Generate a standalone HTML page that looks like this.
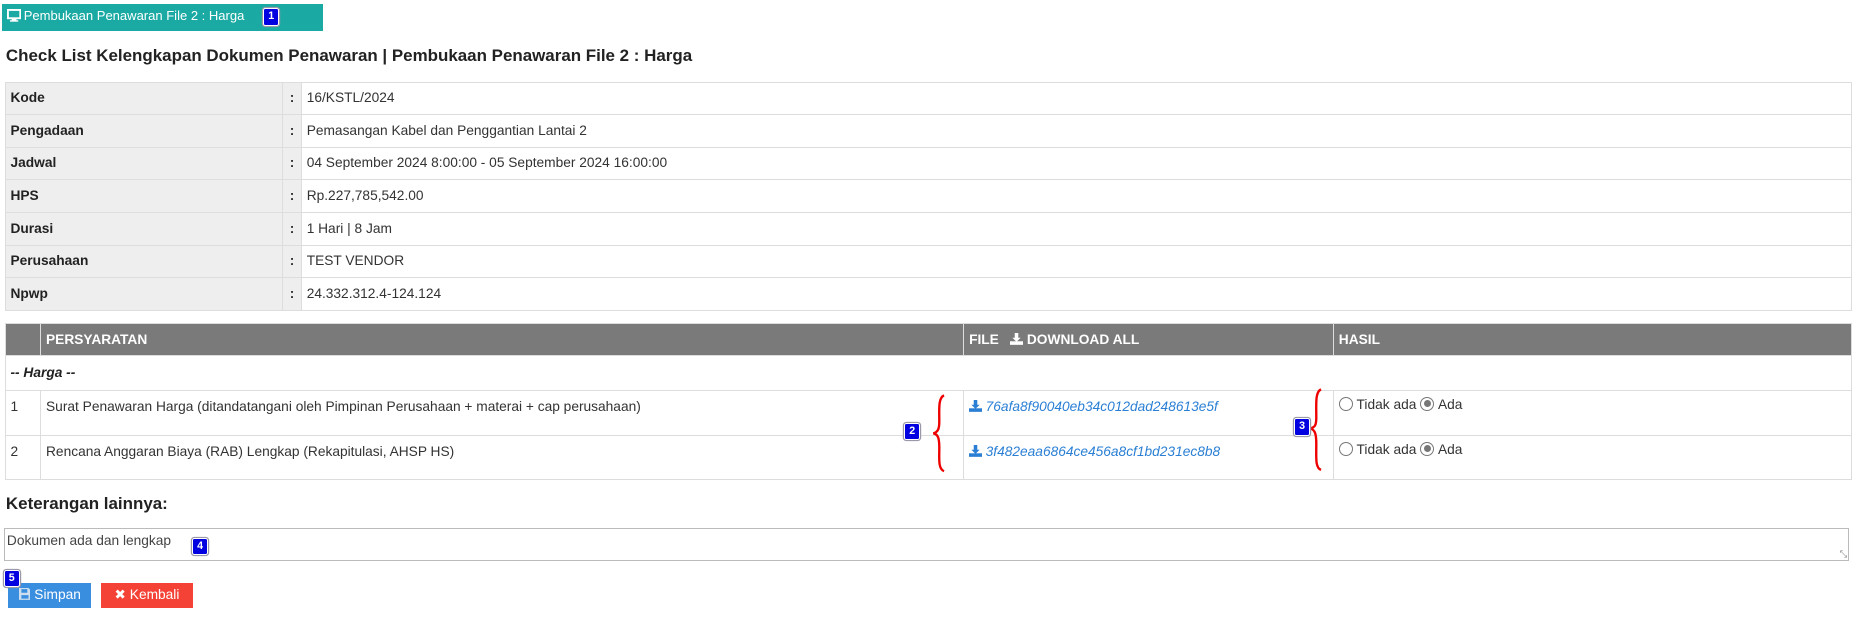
<!DOCTYPE html>
<html><head><meta charset="utf-8"><style>
html,body{margin:0;padding:0;background:#fff;width:1858px;height:630px;overflow:hidden}
#w{position:relative;width:1568px;height:532px;zoom:1.18495;font-family:"Liberation Sans",Arial,sans-serif;color:#333;font-size:11.6px}
.a{position:absolute}
.bar{left:2px;top:3px;width:271px;height:23px;background:#1aa9a3;color:#fff;font-size:11px;line-height:21px}
.bd{position:absolute;background:#0000e0;color:#fff;font-size:9px;font-weight:bold;width:12px;height:13px;line-height:13px;text-align:center;border:1px solid #fff;border-radius:2px;box-shadow:0 0 0 1px #99a}
h1{position:absolute;left:5px;top:39px;margin:0;font-size:14.3px;font-weight:bold;color:#222}
table{position:absolute;border-collapse:collapse;font-size:11.6px;line-height:14px}
td,th{border:1px solid #ddd;padding:0 4px;text-align:left;vertical-align:middle;box-sizing:border-box}
#t1{left:4px;top:69px;width:1559px}
#t1 td{height:27.5px}
#t1 td.l{background:#eee;font-weight:bold;width:234px;color:#222}
#t1 td.c{background:#eee;width:16px;font-weight:bold;text-align:center}
#t2{left:4px;top:273px;width:1559px}
#t2 th{background:#7a7a7a;color:#fff;font-weight:bold;height:27px;vertical-align:top;padding-top:6px;border-color:#ddd}
#t2 td{vertical-align:top;padding-top:7px}
a{color:#2a7fd4;font-style:italic;text-decoration:none}
.rd{display:inline-block;border:1px solid #777;border-radius:50%;vertical-align:-2px;margin-right:3px;position:relative;box-sizing:border-box;width:12px;height:12px}
.rd.on:after{content:"";position:absolute;left:2px;top:2px;width:6px;height:6px;border-radius:50%;background:#777}
.btn{position:absolute;color:#fff;font-size:11.6px;line-height:21px;text-align:center;height:21px}
.dl{display:inline-block;vertical-align:-1px;margin-right:3px}
</style></head><body><div id="w">
<div class="a bar"><svg width="12" height="11" viewBox="0 0 12 11" style="position:absolute;left:4px;top:5px"><rect x="0.8" y="0.8" width="10.4" height="7" fill="none" stroke="#fff" stroke-width="1.6"/><rect x="4" y="8" width="4" height="2" fill="#fff"/><rect x="2.5" y="9.5" width="7" height="1.2" fill="#fff"/></svg><span style="position:absolute;left:18px;top:0">Pembukaan Penawaran File 2 : Harga</span></div>
<div class="bd" style="left:222px;top:7px">1</div>
<h1>Check List Kelengkapan Dokumen Penawaran | Pembukaan Penawaran File 2 : Harga</h1>
<table id="t1">
<tr><td class="l">Kode</td><td class="c">:</td><td>16/KSTL/2024</td></tr>
<tr><td class="l">Pengadaan</td><td class="c">:</td><td>Pemasangan Kabel dan Penggantian Lantai 2</td></tr>
<tr><td class="l">Jadwal</td><td class="c">:</td><td>04 September 2024 8:00:00 - 05 September 2024 16:00:00</td></tr>
<tr><td class="l">HPS</td><td class="c">:</td><td>Rp.227,785,542.00</td></tr>
<tr><td class="l">Durasi</td><td class="c">:</td><td>1 Hari | 8 Jam</td></tr>
<tr><td class="l">Perusahaan</td><td class="c">:</td><td>TEST VENDOR</td></tr>
<tr><td class="l">Npwp</td><td class="c">:</td><td>24.332.312.4-124.124</td></tr>
</table>
<table id="t2">
<tr><th style="width:30px"></th><th style="width:779px">PERSYARATAN</th><th style="width:312px">FILE &nbsp; <svg class="dl" width="11" height="10" viewBox="0 0 11 10"><path d="M4 0h3v4h2l-3.5 3.5L2 4h2z" fill="#fff"/><rect x="0" y="7" width="11" height="3" fill="#fff"/></svg>DOWNLOAD ALL</th><th>HASIL</th></tr>
<tr><td colspan="4" style="height:29px;font-weight:bold;font-style:italic;color:#222">-- Harga --</td></tr>
<tr><td style="height:38px">1</td><td>Surat Penawaran Harga (ditandatangani oleh Pimpinan Perusahaan + materai + cap perusahaan)</td><td><a><svg class="dl" width="11" height="10" viewBox="0 0 11 10"><path d="M4 0h3v4h2l-3.5 3.5L2 4h2z" fill="#2a7fd4"/><rect x="0" y="7" width="11" height="3" fill="#2a7fd4"/></svg>76afa8f90040eb34c012dad248613e5f</a></td><td style="padding-top:5px"><span class="rd"></span>Tidak ada <span class="rd on"></span>Ada</td></tr>
<tr><td style="height:37px">2</td><td>Rencana Anggaran Biaya (RAB) Lengkap (Rekapitulasi, AHSP HS)</td><td><a><svg class="dl" width="11" height="10" viewBox="0 0 11 10"><path d="M4 0h3v4h2l-3.5 3.5L2 4h2z" fill="#2a7fd4"/><rect x="0" y="7" width="11" height="3" fill="#2a7fd4"/></svg>3f482eaa6864ce456a8cf1bd231ec8b8</a></td><td style="padding-top:5px"><span class="rd"></span>Tidak ada <span class="rd on"></span>Ada</td></tr>
</table>
<svg class="a" style="left:786px;top:332px" width="16" height="68"><path d="M11 2 C6 4 7 14 7 24 C7 30 6 33 2 34 C6 35 7 38 7 46 C7 56 6 64 11 66" fill="none" stroke="#e00" stroke-width="2"/></svg>
<svg class="a" style="left:1104px;top:327px" width="16" height="72"><path d="M11 2 C6 4 7 14 7 26 C7 32 6 34 2 35 C6 36 7 40 7 48 C7 60 6 68 11 70" fill="none" stroke="#e00" stroke-width="2"/></svg>
<div class="bd" style="left:763px;top:357px">2</div>
<div class="bd" style="left:1092px;top:353px">3</div>
<div class="a" style="left:5px;top:417px;font-size:14.3px;font-weight:bold;color:#222">Keterangan lainnya:</div>
<div class="a" style="left:3px;top:446px;width:1556px;height:26px;border:1px solid #bbb;font-size:11.6px;color:#444"><span style="position:absolute;left:2px;top:3px">Dokumen ada dan lengkap</span><span style="position:absolute;right:1px;bottom:0;font-size:8px;color:#888">&#x2921;</span></div>
<div class="bd" style="left:162px;top:454px">4</div>
<div class="btn" style="left:7px;top:492px;width:70px;background:#3a8ee0"><svg width="10" height="10" viewBox="0 0 10 10" style="vertical-align:-1px"><path d="M0 0h8l2 2v8H0z M2 1v3h5V1z M2 6v3h6V6z" fill="#cde" fill-rule="evenodd"/></svg> Simpan</div>
<div class="btn" style="left:85px;top:492px;width:78px;background:#f44336">&#x2716; Kembali</div>
<div class="bd" style="left:3px;top:481px">5</div>
</div></body></html>
